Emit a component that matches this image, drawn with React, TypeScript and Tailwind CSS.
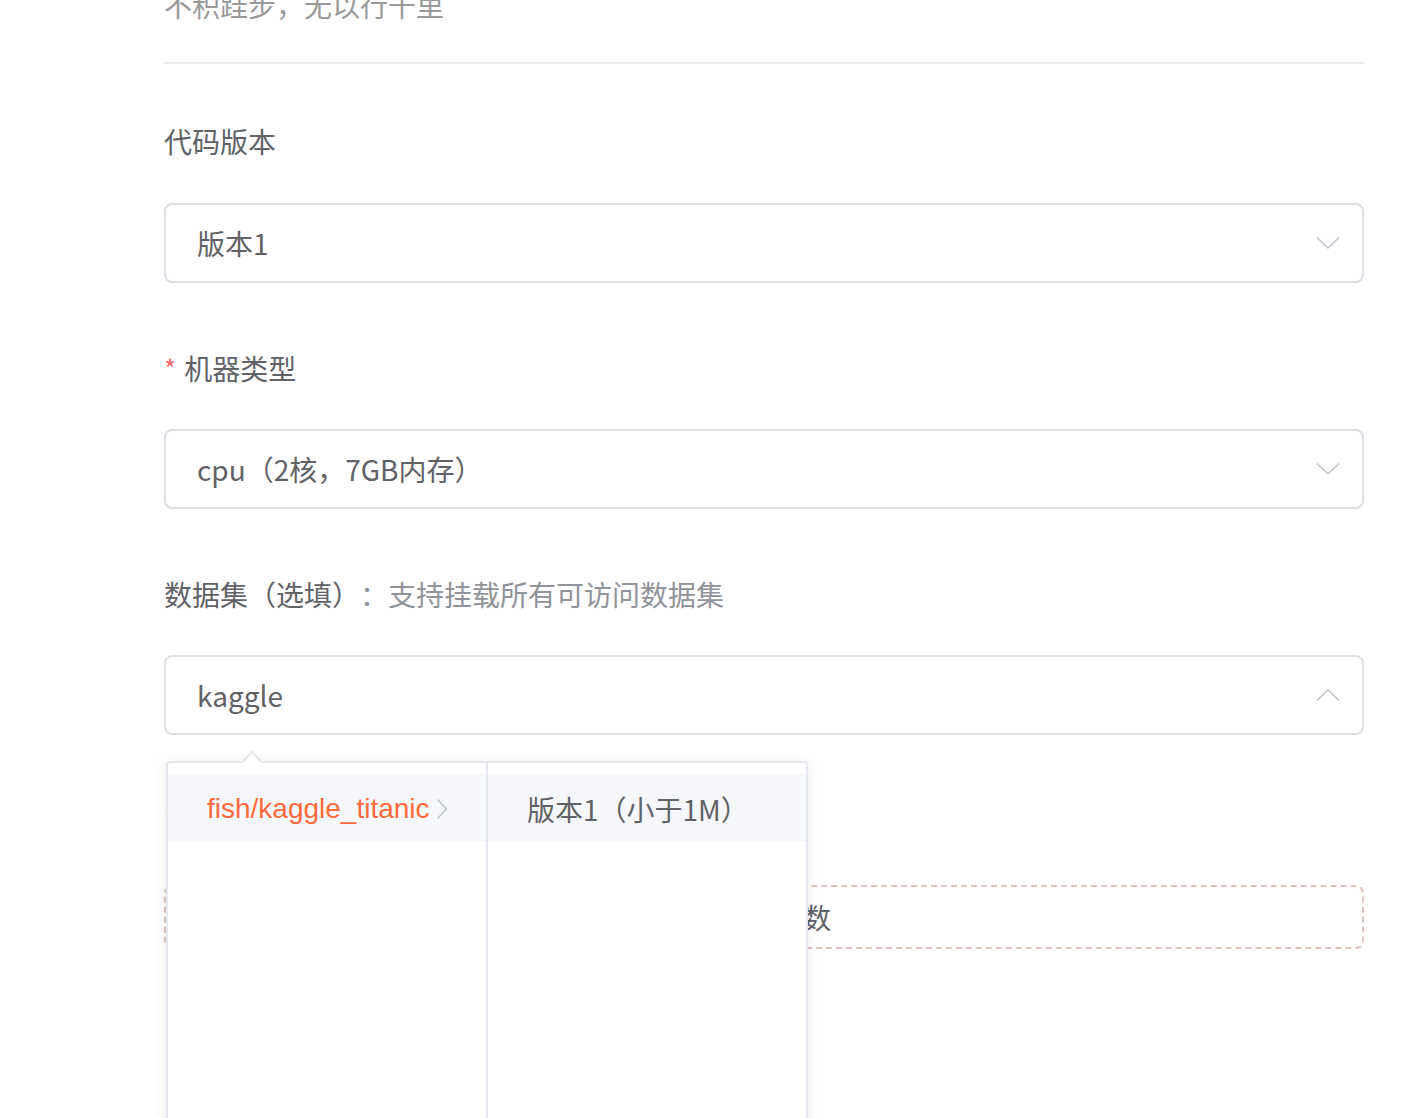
import React from 'react';

const font = { fontFamily: '"Noto Sans CJK SC", "Liberation Sans", sans-serif' };

function Chevron({ up }: { up?: boolean }) {
  return (
    <svg width="24" height="14" viewBox="0 0 24 14" fill="none" className="shrink-0">
      <path
        d={up ? 'M1 12.5L12 2L23 12.5' : 'M1 1.5L12 12L23 1.5'}
        stroke="#c0c4cc"
        strokeWidth="1.6"
      />
    </svg>
  );
}

function SelectBox({ value, open }: { value: string; open?: boolean }) {
  return (
    <div className="flex h-[80px] items-center justify-between rounded-[8px] border-2 border-[#dcdfe6] bg-white pl-[31px] pr-[22px] text-[28px] text-[#606266]">
      <span>{value}</span>
      <Chevron up={open} />
    </div>
  );
}

function Label({ children, required }: { children: React.ReactNode; required?: boolean }) {
  return (
    <div className="flex h-[40px] items-center text-[28px] leading-[40px] text-[#606266]">
      {required && <span className="mr-[8px] text-[26px] text-[#f56c6c]">*</span>}
      {children}
    </div>
  );
}

export default function App() {
  return (
    <div className="h-[1118px] overflow-hidden bg-white [text-spacing-trim:space-all]" style={font}>
      <div className="ml-[164px] w-[1200px]">
        {/* 顶部描述 */}
        <div className="-mt-[15px] h-[40px] text-[28px] leading-[40px] text-[#999999]">
          不积跬步，无以行千里
        </div>
        <div className="mt-[37px] h-[2px] bg-[#ebebeb]" />

        <div className="mt-[57px]">
          <Label>代码版本</Label>
          <div className="mt-[42px]">
            <SelectBox value="版本1" />
          </div>
        </div>

        <div className="mt-[65px]">
          <Label required>机器类型</Label>
          <div className="mt-[41px]">
            <SelectBox value="cpu（2核，7GB内存）" />
          </div>
        </div>

        <div className="mt-[65px]">
          <Label>
            数据集（选填）<span className="text-[#909399]">：支持挂载所有可访问数据集</span>
          </Label>
          <div className="relative mt-[41px]">
            <SelectBox value="kaggle" open />

            {/* 级联下拉 */}
            <div className="absolute left-[2px] top-[106px] z-10 h-[420px] w-[642px] rounded-[4px] border-2 border-[#e4e7ed] bg-white shadow-[0_2px_14px_rgba(0,0,0,0.08)]">
              <div className="absolute -top-[9px] left-[76px] h-[16px] w-[16px] rotate-45 border-l-2 border-t-2 border-[#e4e7ed] bg-white" />
              <div className="relative flex h-full">
                <div className="w-[320px] border-r-2 border-[#e4e7ed] pt-[11px]">
                  <div className="flex h-[67px] items-center bg-[#f5f7fa] pb-[1px] pl-[39px] pt-[3px] text-[28px] text-[#ff6a3d]">
                    <span style={{ fontFamily: '"Liberation Sans", sans-serif' }}>fish/kaggle_titanic</span>
                    <svg width="12" height="22" viewBox="0 0 12 22" fill="none" className="ml-[6px]">
                      <path d="M1.5 1.5L10.5 11L1.5 20.5" stroke="#c0c4cc" strokeWidth="1.6" />
                    </svg>
                  </div>
                </div>
                <div className="flex-1 pt-[11px]">
                  <div className="flex h-[67px] items-center bg-[#f5f7fa] pl-[39px] pt-[2px] text-[28px] text-[#606266]">
                    版本1（小于1M）
                  </div>
                </div>
              </div>
            </div>
          </div>
        </div>

        <div className="mt-[66px]">
          <Label required>启动参数</Label>
          <div className="mt-[44px] flex h-[64px] items-center justify-center rounded-[8px] border-2 border-dashed border-[#dcc5bc] text-[28px] text-[#606266]">
            + 添加参数
          </div>
        </div>
      </div>
    </div>
  );
}
